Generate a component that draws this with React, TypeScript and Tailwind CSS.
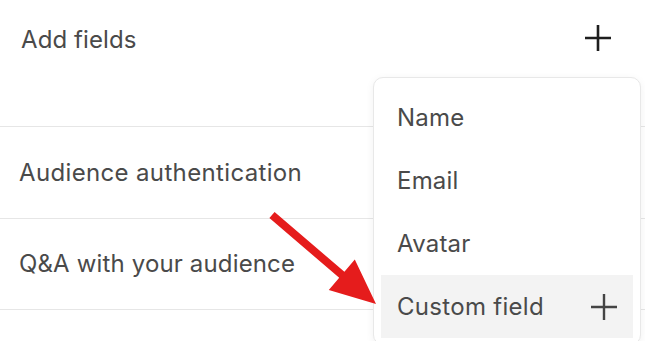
import React from "react";

function Plus({ size, stroke, color }: { size: number; stroke: number; color: string }) {
  return (
    <svg width={size} height={size} viewBox="0 0 26 26" fill="none">
      <path d="M13 0V26M0 13H26" stroke={color} strokeWidth={stroke} />
    </svg>
  );
}

export default function App() {
  const items = ["Name", "Email", "Avatar"];
  return (
    <div
      className="relative w-[645px] h-[341px] overflow-hidden bg-white text-[#4a4a4a]"
      style={{ fontFamily: "Inter, 'Noto Sans', sans-serif" }}
    >
      <div className="h-[127px] border-b border-[#e6e6e6] flex items-start justify-between pl-[21px] pr-[34px] pt-[25px]">
        <span className="text-[24px] leading-[30px] tracking-[0.1px]">Add fields</span>
        <Plus size={26} stroke={2.6} color="#1e1e1e" />
      </div>
      <div className="h-[92px] border-b border-[#e6e6e6] flex items-center pl-[19px]">
        <span className="text-[24px] leading-[30px] tracking-[0.35px]">Audience authentication</span>
      </div>
      <div className="h-[91px] border-b border-[#e6e6e6] flex items-center pl-[19px]">
        <span className="text-[24px] leading-[30px] tracking-[0.15px]">Q&amp;A with your audience</span>
      </div>

      <div className="absolute left-[373px] top-[77px] w-[268px] h-[268px] rounded-[10px] border border-[#e8e8e8] bg-white shadow-[0_2px_8px_rgba(0,0,0,0.06)] pt-[8px] px-[7px]">
        {items.map((t) => (
          <div key={t} className="h-[63px] flex items-center pl-[16px] text-[24px] tracking-[0.2px]">
            {t}
          </div>
        ))}
        <div className="h-[63px] flex items-center justify-between pl-[16px] pr-[16px] bg-[#f3f3f3] text-[24px] tracking-[0.3px]">
          <span>Custom field</span>
          <Plus size={26} stroke={2.4} color="#444444" />
        </div>
      </div>

      <svg className="absolute left-0 top-0 pointer-events-none" width="645" height="341">
        <polygon
          points="274.6,212 344.4,271.8 354.8,259.6 376,304 328.8,290 339.2,277.8 269.4,218"
          fill="#e51c1c"
        />
      </svg>
    </div>
  );
}
